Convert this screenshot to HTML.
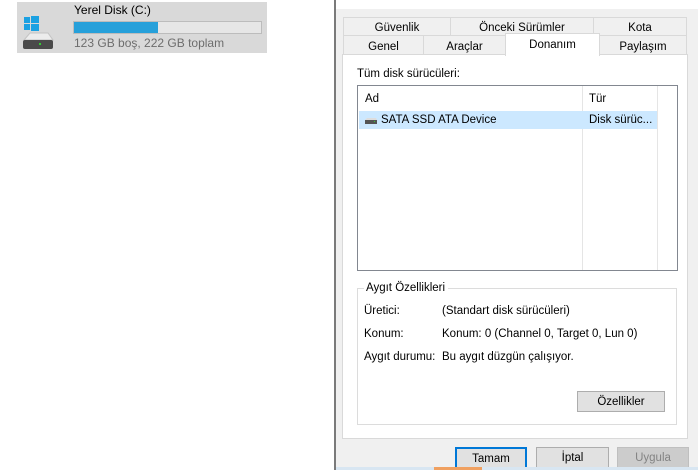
<!DOCTYPE html>
<html><head><meta charset="utf-8"><style>
*{margin:0;padding:0;box-sizing:border-box}
body{width:698px;height:470px;position:relative;overflow:hidden;background:#fff;font-family:"Liberation Sans",sans-serif;font-size:11.5px;color:#000}
.a{position:absolute}
.tab{position:absolute;border:1px solid #d9d9d9;background:#f0f0f0;text-align:center;line-height:17px;font-size:11.5px;padding-top:2px}
.btn{position:absolute;border:1px solid #adadad;background:#e1e1e1;text-align:center;line-height:21px;font-size:11.5px}
</style></head><body>
<div class="a" style="left:17px;top:2px;width:250px;height:51px;background:#d9d9d9"></div>
<svg class="a" style="left:22px;top:15px" width="32" height="36">
<rect x="2" y="2" width="6" height="6" fill="#1ba1e2"/><rect x="9" y="1" width="8" height="7" fill="#1ba1e2"/>
<rect x="2" y="9" width="6" height="6" fill="#1ba1e2"/><rect x="9" y="9" width="8" height="7" fill="#1ba1e2"/>
<path d="M2 25 L8 18 L26 18 L31 25 Z" fill="#ececec" stroke="#c4c4c4"/>
<rect x="1" y="25" width="30" height="9" rx="2" fill="#4a4a4a"/>
<rect x="17" y="28" width="2" height="2" fill="#3c3"/>
</svg>
<div class="a" style="left:74px;top:3px;font-size:12px">Yerel Disk (C:)</div>
<div class="a" style="left:73px;top:21px;width:189px;height:13px;background:#e6e6e6;border:1px solid #bcbcbc"><div style="width:84px;height:11px;background:#26a0da"></div></div>
<div class="a" style="left:74px;top:36px;color:#6d6d6d;font-size:12px">123 GB boş, 222 GB toplam</div>
<div class="a" style="left:334px;top:0;width:2px;height:470px;background:#7a7a7a"></div>
<div class="a" style="left:336px;top:0;width:362px;height:470px;background:#f0f0f0"></div>
<div class="a" style="left:336px;top:0;width:362px;height:9px;background:#fff"></div>
<div class="tab" style="left:343px;top:17px;width:108px;height:19px">Güvenlik</div>
<div class="tab" style="left:450px;top:17px;width:144px;height:19px">Önceki Sürümler</div>
<div class="tab" style="left:593px;top:17px;width:94px;height:19px">Kota</div>
<div class="a" style="left:342px;top:54px;width:346px;height:385px;background:#fff;border:1px solid #d9d9d9"></div>
<div class="tab" style="left:343px;top:35px;width:81px;height:20px;line-height:19px">Genel</div>
<div class="tab" style="left:423px;top:35px;width:83px;height:20px;line-height:19px">Araçlar</div>
<div class="tab" style="left:599px;top:35px;width:88px;height:20px;line-height:19px">Paylaşım</div>
<div class="tab" style="left:505px;top:33px;width:95px;height:23px;background:#fff;border-bottom:none;line-height:19px">Donanım</div>
<div class="a" style="left:357px;top:68px">Tüm disk sürücüleri:</div>
<div class="a" style="left:357px;top:85px;width:321px;height:186px;border:1px solid #828790;background:#fff"></div>
<div class="a" style="left:582px;top:86px;width:1px;height:184px;background:#e5e5e5"></div>
<div class="a" style="left:657px;top:86px;width:1px;height:184px;background:#e5e5e5"></div>
<div class="a" style="left:365px;top:93px">Ad</div>
<div class="a" style="left:589px;top:93px">Tür</div>
<div class="a" style="left:359px;top:111px;width:298px;height:18px;background:#cce8ff"></div>
<svg class="a" style="left:364px;top:116px" width="14" height="10"><path d="M1 4 L3 2 L12 2 L13 4Z" fill="#ddd"/><rect x="1" y="4" width="12" height="4" fill="#555"/><rect x="10" y="5" width="1" height="1" fill="#3c3"/></svg>
<div class="a" style="left:381px;top:114px">SATA SSD ATA Device</div>
<div class="a" style="left:589px;top:114px">Disk sürüc...</div>
<div class="a" style="left:357px;top:288px;width:320px;height:137px;border:1px solid #dcdcdc"></div>
<div class="a" style="left:364px;top:282px;background:#fff;padding:0 3px 0 2px">Aygıt Özellikleri</div>
<div class="a" style="left:364px;top:305px">Üretici:</div>
<div class="a" style="left:442px;top:305px">(Standart disk sürücüleri)</div>
<div class="a" style="left:364px;top:328px">Konum:</div>
<div class="a" style="left:442px;top:328px">Konum: 0 (Channel 0, Target 0, Lun 0)</div>
<div class="a" style="left:364px;top:351px">Aygıt durumu:</div>
<div class="a" style="left:442px;top:351px">Bu aygıt düzgün çalışıyor.</div>
<div class="btn" style="left:577px;top:391px;width:88px;height:21px;line-height:20px">Özellikler</div>
<div class="btn" style="left:455px;top:447px;width:72px;height:22px;border:2px solid #0078d7;line-height:20px">Tamam</div>
<div class="btn" style="left:536px;top:447px;width:73px;height:22px">İptal</div>
<div class="btn" style="left:617px;top:447px;width:72px;height:22px;background:#ccc;border-color:#bfbfbf;color:#838383">Uygula</div>
<div class="a" style="left:336px;top:467px;width:362px;height:3px;background:#d8e6f2"></div>
<div class="a" style="left:434px;top:467px;width:48px;height:3px;background:#f0a060"></div>
</body></html>
